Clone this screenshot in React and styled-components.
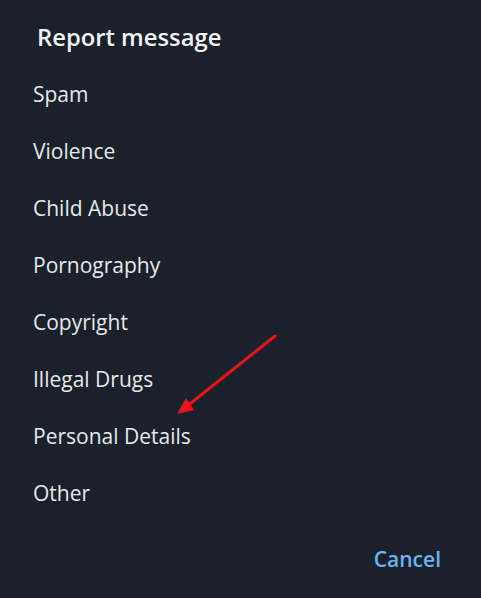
import React from "react";
import styled, { createGlobalStyle } from "styled-components";

const Global = createGlobalStyle`
  html, body { margin: 0; padding: 0; background: #1a212b; }
  body { font-family: "Open Sans", "Noto Sans", sans-serif; }
`;

const Dialog = styled.div`
  position: relative;
  width: 481px;
  height: 598px;
  background: #1a212b;
  box-sizing: border-box;
  padding: 20px 0 0 0;
  display: flex;
  flex-direction: column;
`;

const Title = styled.div`
  color: #f2f3f5;
  font-size: 23.8px;
  font-weight: 600;
  line-height: 34px;
  padding-left: 37px;
  margin-bottom: 12px;
`;

const List = styled.div`
  display: flex;
  flex-direction: column;
`;

const Item = styled.div`
  color: #e6e8eb;
  font-size: 21px;
  line-height: 57px;
  height: 57px;
  padding-left: 33px;
`;

const Footer = styled.div`
  display: flex;
  justify-content: flex-end;
  padding: 0 40px 0 0;
  margin-top: 17px;
`;

const CancelButton = styled.div`
  color: #6ab3f3;
  font-size: 21px;
  font-weight: 600;
  line-height: 40px;
`;

const Arrow = styled.svg`
  position: absolute;
  left: 0;
  top: 0;
  pointer-events: none;
`;

const items = [
  "Spam",
  "Violence",
  "Child Abuse",
  "Pornography",
  "Copyright",
  "Illegal Drugs",
  "Personal Details",
  "Other",
];

export default function App() {
  return (
    <>
      <Global />
      <Dialog>
        <Title>Report message</Title>
        <List>
          {items.map((t) => (
            <Item key={t}>{t}</Item>
          ))}
        </List>
        <Footer>
          <CancelButton>Cancel</CancelButton>
        </Footer>
        <Arrow width="481" height="598" viewBox="0 0 481 598">
          <line x1="275" y1="336" x2="186" y2="407" stroke="#e8141b" strokeWidth="3" strokeLinecap="round" />
          <polygon points="177,414 186,398 194,410" fill="#e8141b" />
        </Arrow>
      </Dialog>
    </>
  );
}
